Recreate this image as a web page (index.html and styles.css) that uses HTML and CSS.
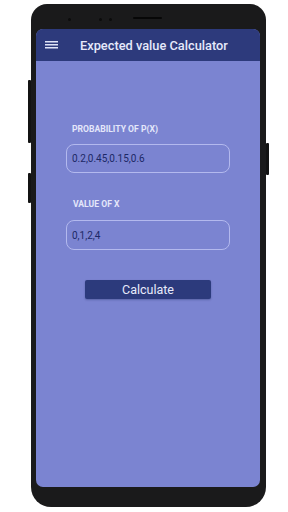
FILE: index.html
```html
<!DOCTYPE html>
<html>
<head>
<meta charset="utf-8">
<link rel="stylesheet" href="styles.css">
</head>
<body>
<div class="phone">
  <span class="btn-side btn-l1"></span>
  <span class="btn-side btn-l2"></span>
  <span class="btn-side btn-r1"></span>
  <div class="bezel-top">
    <span class="dot d1"></span>
    <span class="dot d2"></span>
    <span class="dot d3"></span>
    <span class="speaker"></span>
  </div>
  <div class="screen">
    <div class="appbar">
      <svg class="menu" width="13" height="8" viewBox="0 0 13 8"><path d="M0 0.75H13M0 3.75H13M0 6.75H13" stroke="#dfe3f7" stroke-width="1.4"/></svg>
      <span class="title">Expected value Calculator</span>
    </div>
    <div class="content">
      <div class="label">PROBABILITY OF P(X)</div>
      <div class="field">0.2,0.45,0.15,0.6</div>
      <div class="label label2">VALUE OF X</div>
      <div class="field field2">0,1,2,4</div>
      <div class="calc">Calculate</div>
    </div>
  </div>
</div>
</body>
</html>
```
FILE: styles.css
```css
html, body {
  margin: 0;
  padding: 0;
  background: #ffffff;
  width: 288px;
  height: 512px;
  overflow: hidden;
  font-family: Roboto, "Liberation Sans", sans-serif;
}
.phone {
  position: relative;
  box-sizing: border-box;
  margin: 4px 0 0 31px;
  width: 235px;
  height: 503px;
  background: #1a1a1b;
  border-radius: 16px 16px 20px 20px;
  padding: 0 6px 20px 5px;
  display: flex;
  flex-direction: column;
}
.btn-side {
  position: absolute;
  width: 3px;
  background: #131313;
  border-radius: 1px;
}
.btn-l1 { left: -3px; top: 76px; height: 63px; }
.btn-l2 { left: -3px; top: 169px; height: 30px; }
.btn-r1 { right: -3px; top: 139px; height: 32px; }
.bezel-top {
  position: relative;
  height: 25px;
  flex: none;
}
.dot {
  position: absolute;
  width: 3px;
  height: 3px;
  border-radius: 50%;
  background: #0c0c0c;
  top: 14px;
}
.d1 { left: 32px; }
.d2 { left: 63px; }
.d3 { left: 73px; }
.speaker {
  position: absolute;
  left: 97px;
  top: 13px;
  width: 29px;
  height: 2px;
  border-radius: 1px;
  background: #070707;
}
.screen {
  flex: 1;
  background: #7b84d1;
  border-radius: 7px;
  overflow: hidden;
  display: flex;
  flex-direction: column;
}
.appbar {
  height: 32px;
  background: #2d3a7c;
  display: flex;
  align-items: center;
  padding-left: 9px;
  flex: none;
}
.menu {
  display: block;
}
.title {
  margin-left: 22px;
  color: #e6e9fb;
  font-size: 12.8px;
  font-weight: 500;
}
.content {
  padding: 63px 0 0 30px;
  display: flex;
  flex-direction: column;
  align-items: flex-start;
}
.label {
  font-size: 8.6px;
  line-height: 10px;
  font-weight: 700;
  color: #e4e7fa;
  padding-left: 6px;
  margin-bottom: 10px;
}
.label2 {
  margin-top: 26px;
  margin-bottom: 11px;
  padding-left: 7px;
}
.field {
  box-sizing: border-box;
  width: 164px;
  height: 29px;
  border: 1px solid #b3b9ee;
  border-radius: 8px;
  padding-left: 5px;
  display: flex;
  align-items: center;
  font-size: 10px;
  color: #1c2866;
}
.field2 {
  height: 30px;
}
.calc {
  margin: 30px 0 0 19px;
  width: 126px;
  height: 19px;
  background: #2c3a7c;
  border-radius: 2px;
  color: #e8ebfb;
  font-size: 12.5px;
  display: flex;
  align-items: center;
  justify-content: center;
  box-shadow: 0 1px 2px rgba(30, 40, 90, 0.35);
}
```
